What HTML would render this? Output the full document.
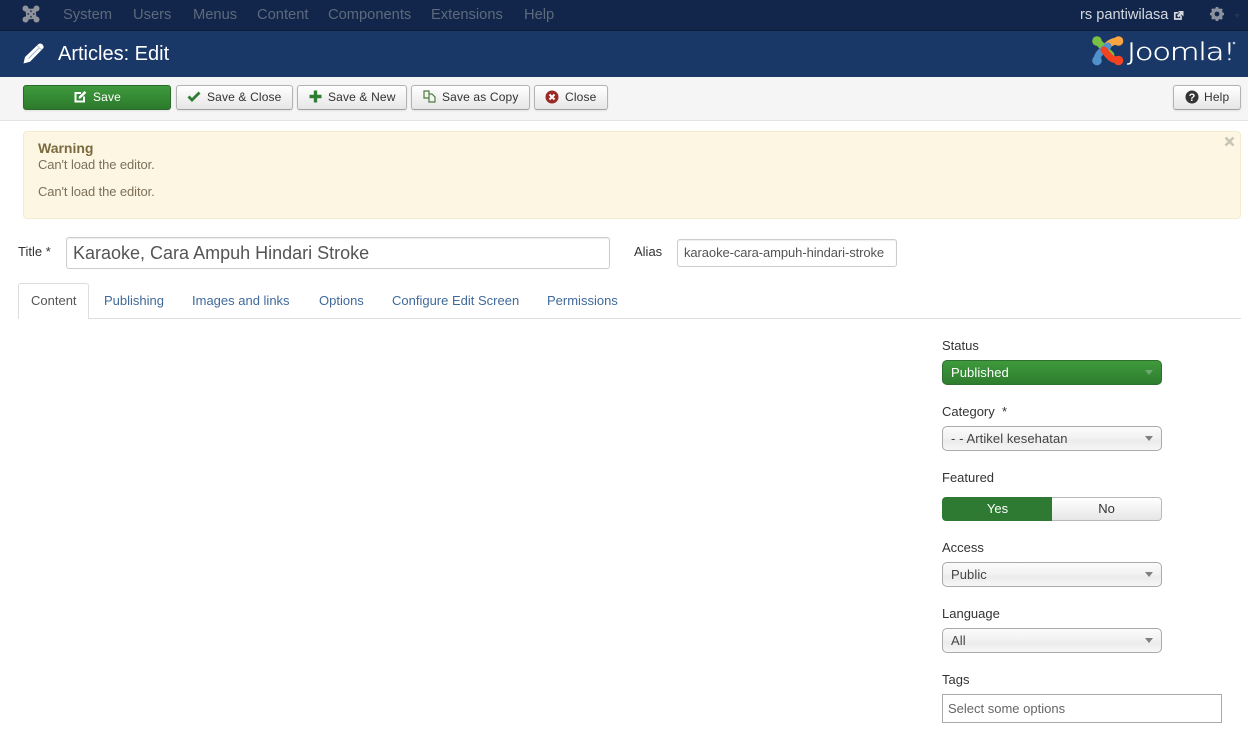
<!DOCTYPE html>
<html><head><meta charset="utf-8"><style>
*{box-sizing:border-box}
html,body{margin:0;padding:0;width:1248px;height:745px;overflow:hidden;background:#fff;font-family:"Liberation Sans",Arial,sans-serif;font-size:13px;color:#333}
.a{position:absolute;white-space:nowrap}
.nav{top:6px;font-size:14.7px;line-height:18px;color:#5d6a7c}
.btn{position:absolute;top:85px;height:25px;border:1px solid #b3b3b3;border-bottom-color:#a0a0a0;border-radius:3px;background:linear-gradient(#fff,#e6e6e6);box-shadow:0 1px 2px rgba(0,0,0,.08);font-size:12px;letter-spacing:.15px;line-height:23px;color:#333;white-space:nowrap}
.btn svg{position:absolute;top:4px}
.btn span{position:absolute;top:0}
.tab{top:293px;font-size:13px;line-height:16px;color:#3f6a9a}
.lab{left:942px;font-size:13px;line-height:16px;color:#333}
.sel{position:absolute;left:942px;width:220px;height:25px;border:1px solid #aaa;border-radius:5px;background:linear-gradient(#fbfbfb 0%,#f2f2f2 45%,#ebebeb 60%,#f6f6f6 100%);line-height:23px;padding-left:8px;font-size:13px;letter-spacing:.08px;color:#444}
.arr{position:absolute;left:1145px;width:0;height:0;border-left:4px solid transparent;border-right:4px solid transparent;border-top:5px solid #808080}
</style></head><body>
<div class="a" style="left:0;top:0;width:1248px;height:31px;background:#11264a;border-bottom:1px solid #0b1b38"></div>
<svg class="a" style="left:22px;top:5px" width="18" height="18" viewBox="0 0 18 18"><g fill="#8f949c"><circle cx="3.5" cy="3.5" r="3"/><circle cx="14.5" cy="3.5" r="3"/><circle cx="3.5" cy="14.5" r="3"/><circle cx="14.5" cy="14.5" r="3"/></g><path d="M3.5 2.5Q9 5 14.5 2.5Q13 9 15.5 14.5Q9 13 3.5 15.5Q5 9 2.5 3.5Z" fill="#8f949c"/><g fill="#34435c"><circle cx="9" cy="6.2" r="1"/><circle cx="9" cy="11.8" r="1"/><circle cx="6.2" cy="9" r="1"/><circle cx="11.8" cy="9" r="1"/></g></svg>
<div class="a nav" style="left:63px">System</div>
<div class="a nav" style="left:133px">Users</div>
<div class="a nav" style="left:193px">Menus</div>
<div class="a nav" style="left:257px">Content</div>
<div class="a nav" style="left:328px">Components</div>
<div class="a nav" style="left:431px">Extensions</div>
<div class="a nav" style="left:524px">Help</div>
<div class="a" style="left:1080px;top:6px;font-size:14.6px;line-height:18px;color:#d5d9df">rs pantiwilasa</div>
<svg class="a" style="left:1173px;top:9px" width="12" height="12" viewBox="0 0 12 12"><path d="M8 6.5V10H1.8V3.8H5.5" fill="none" stroke="#d5d9df" stroke-width="1.7"/><path d="M5 2H10.5V7.5L8.5 5.5 5.5 8.5 3.8 6.8 6.8 3.8Z" fill="#d5d9df"/></svg>
<svg class="a" style="left:1209px;top:6px" width="16" height="16" viewBox="0 0 16 16"><circle cx="8" cy="8" r="4.4" fill="none" stroke="#8a929e" stroke-width="3"/><g stroke="#8a929e" stroke-width="2.6"><path d="M8 1V15M1 8H15M3 3L13 13M13 3L3 13"/></g><circle cx="8" cy="8" r="2.4" fill="#11264a"/></svg>
<div class="a" style="left:1234px;top:14px;border-left:3.5px solid transparent;border-right:3.5px solid transparent;border-top:4px solid #25344f"></div>

<div class="a" style="left:0;top:31px;width:1248px;height:46px;background:#193868"></div>
<svg class="a" style="left:23px;top:42px" width="22" height="22" viewBox="0 0 22 22"><path d="M0.5 21.5 L2 15 L15 2.5 Q17 0.5 19.5 2.5 Q21.8 5 19.5 7 L7 19.8Z" fill="#fff"/><path d="M5.5 16.5 L15.8 6.2" stroke="#9fb0c8" stroke-width="1"/><path d="M14 3.5 L18.5 8" stroke="#9fb0c8" stroke-width=".8"/></svg>
<div class="a" style="left:58px;top:42px;font-size:20px;line-height:24px;color:#fff">Articles: Edit</div>
<svg class="a" style="left:1092px;top:35px" width="32" height="31" viewBox="0 0 32 31"><g fill="none" stroke-linecap="round"><path d="M26 6 Q19 6 14 12 L10 16" stroke="#f9a541" stroke-width="7"/><path d="M5 6 L19 20" stroke="#7ac143" stroke-width="7"/><path d="M5 25 Q5 20 10 16 L16 11" stroke="#5091cd" stroke-width="7"/><path d="M26 25 Q20 25 16 20 L12 15" stroke="#f44321" stroke-width="7"/></g><circle cx="5" cy="6" r="4.8" fill="#7ac143"/><circle cx="26.5" cy="6" r="4.8" fill="#f9a541"/><circle cx="5" cy="25.5" r="4.8" fill="#5091cd"/><circle cx="26.5" cy="25.5" r="4.8" fill="#f44321"/></svg>
<svg class="a" style="left:1126px;top:36px" width="112" height="30" viewBox="0 0 112 30"><text transform="translate(1 24) scale(1.27 1)" x="0" y="0" font-family="DejaVu Sans,Liberation Sans,sans-serif" font-weight="200" font-size="24" fill="#fff" stroke="#fff" stroke-width=".35" letter-spacing="-.9">Joomla!</text><circle cx="108" cy="7" r="1.3" fill="#bcc6d6"/></svg>

<div class="a" style="left:0;top:77px;width:1248px;height:44px;background:#f5f5f5;border-bottom:1px solid #e3e3e3"></div>
<div class="btn" style="left:23px;width:148px;background:linear-gradient(#3f9a3c,#2c7a2d);border-color:#2a6b2a;color:#fff;"><svg style="left:50px" width="13" height="13" viewBox="0 0 13 13"><path d="M10 6.5V11.5H1.5V3H7" fill="none" stroke="#fff" stroke-width="2"/><path d="M5 6.5L10.5 1 12.3 2.8 6.8 8.3 4.5 8.8Z" fill="#fff"/></svg><span style="left:69px">Save</span></div>
<div class="btn" style="left:176px;width:117px"><svg style="left:10px" width="14" height="13" viewBox="0 0 14 13"><path d="M1.5 6.5L5 10 12.5 2.5" fill="none" stroke="#2f7d32" stroke-width="2.8"/></svg><span style="left:30px">Save &amp; Close</span></div>
<div class="btn" style="left:297px;width:110px"><svg style="left:11px" width="13" height="13" viewBox="0 0 13 13"><path d="M6.5 0.5V12.5M0.5 6.5H12.5" stroke="#2f7d32" stroke-width="3.4"/></svg><span style="left:30px">Save &amp; New</span></div>
<div class="btn" style="left:411px;width:119px"><svg style="left:11px" width="14" height="13" viewBox="0 0 14 13"><path d="M1 1H6V8H1ZM6 4H9L12 7V12H6V8" fill="#f3f6ef" stroke="#4d7a3f" stroke-width="1.2"/></svg><span style="left:30px">Save as Copy</span></div>
<div class="btn" style="left:534px;width:74px"><svg style="left:10px" width="14" height="14" viewBox="0 0 14 14"><circle cx="7" cy="7" r="6.5" fill="#9a2a26"/><path d="M4.5 4.5L9.5 9.5M9.5 4.5L4.5 9.5" stroke="#fff" stroke-width="2"/></svg><span style="left:30px">Close</span></div>
<div class="btn" style="left:1173px;width:68px"><svg style="left:11px" width="14" height="14" viewBox="0 0 14 14"><circle cx="7" cy="7" r="6.5" fill="#333"/><text x="7" y="10.8" text-anchor="middle" font-size="11" font-weight="bold" fill="#fff" font-family="Liberation Sans">?</text></svg><span style="left:30px">Help</span></div>

<div class="a" style="left:23px;top:131px;width:1218px;height:88px;background:#fcf6e3;border:1px solid #f5ebcf;border-radius:4px"></div>
<div class="a" style="left:38px;top:140px;font-size:14px;line-height:16px;font-weight:bold;color:#7b6a3d">Warning</div>
<div class="a" style="left:38px;top:157px;font-size:13px;line-height:16px;letter-spacing:-.1px;color:#7d7058">Can't load the editor.</div>
<div class="a" style="left:38px;top:184px;font-size:13px;line-height:16px;letter-spacing:-.1px;color:#7d7058">Can't load the editor.</div>
<svg class="a" style="left:1224px;top:136px" width="11" height="11" viewBox="0 0 11 11"><path d="M1.5 1.5L9.5 9.5M9.5 1.5L1.5 9.5" stroke="#c9c5b6" stroke-width="2.6"/></svg>

<div class="a" style="left:18px;top:244px;line-height:16px;font-size:13px">Title *</div>
<div class="a" style="left:66px;top:237px;width:544px;height:32px;border:1px solid #ccc;border-radius:3px;box-shadow:inset 0 1px 1px rgba(0,0,0,.07);font-size:18px;line-height:30px;padding-left:6px;color:#555">Karaoke, Cara Ampuh Hindari Stroke</div>
<div class="a" style="left:634px;top:244px;line-height:16px;font-size:13px">Alias</div>
<div class="a" style="left:677px;top:239px;width:220px;height:28px;border:1px solid #ccc;border-radius:3px;box-shadow:inset 0 1px 1px rgba(0,0,0,.07);font-size:13px;letter-spacing:-.09px;line-height:26px;padding-left:6px;color:#555">karaoke-cara-ampuh-hindari-stroke</div>

<div class="a" style="left:18px;top:318px;width:1223px;height:1px;background:#ddd"></div>
<div class="a" style="left:18px;top:283px;width:71px;height:36px;background:#fff;border:1px solid #ddd;border-bottom:0;border-radius:3px 3px 0 0"></div>
<div class="a tab" style="left:31px;color:#555">Content</div>
<div class="a tab" style="left:104px">Publishing</div>
<div class="a tab" style="left:192px">Images and links</div>
<div class="a tab" style="left:319px">Options</div>
<div class="a tab" style="left:392px">Configure Edit Screen</div>
<div class="a tab" style="left:547px">Permissions</div>

<div class="a lab" style="top:338px">Status</div>
<div class="sel" style="top:360px;background:linear-gradient(#3f9a3c,#2e7d2f);border-color:#2f7030;color:#fff">Published</div>
<div class="arr" style="top:370px;border-top-color:#6fa86d"></div>
<div class="a lab" style="top:404px">Category&nbsp; *</div>
<div class="sel" style="top:426px">- - Artikel kesehatan</div>
<div class="arr" style="top:436px"></div>
<div class="a lab" style="top:470px">Featured</div>
<div class="a" style="left:942px;top:497px;width:111px;height:24px;background:#2f7a33;border-radius:4px 0 0 4px;color:#fff;text-align:center;line-height:23px">Yes</div>
<div class="a" style="left:1052px;top:497px;width:110px;height:24px;border:1px solid #b9b9b9;border-left:0;border-radius:0 4px 4px 0;background:linear-gradient(#fff,#e6e6e6);text-align:center;line-height:21px;color:#333">No</div>
<div class="a lab" style="top:540px">Access</div>
<div class="sel" style="top:562px">Public</div>
<div class="arr" style="top:572px"></div>
<div class="a lab" style="top:606px">Language</div>
<div class="sel" style="top:628px">All</div>
<div class="arr" style="top:638px"></div>
<div class="a lab" style="top:672px">Tags</div>
<div class="a" style="left:942px;top:694px;width:280px;height:29px;border:1px solid #aaa;font-size:13px;line-height:27px;padding-left:5px;color:#666">Select some options</div>
</body></html>
